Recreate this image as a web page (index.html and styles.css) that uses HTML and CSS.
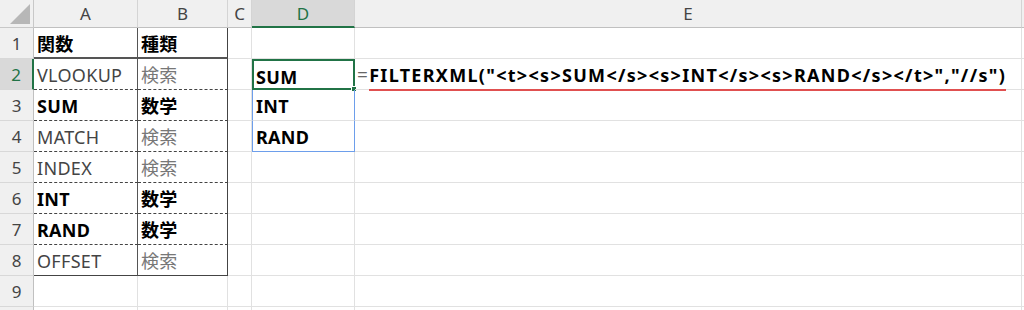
FILE: index.html
```html
<!DOCTYPE html>
<html lang="ja">
<head>
<meta charset="utf-8">
<link rel="stylesheet" href="styles.css">
</head>
<body>
<div class="sheet">
  <div class="corner"><span class="tri"></span></div>
  <div class="ch">A</div>
  <div class="ch">B</div>
  <div class="ch">C</div>
  <div class="ch ch-sel">D</div>
  <div class="ch">E</div>
  <div class="ch ch-end"></div>

  <div class="rh">1</div>
  <div class="c t-a t-head b">関数</div>
  <div class="c t-b t-head b">種類</div>
  <div class="c"></div>
  <div class="c"></div>
  <div class="c"></div>
  <div class="c"></div>

  <div class="rh rh-sel">2</div>
  <div class="c t-a n">VLOOKUP</div>
  <div class="c t-b n jp">検索</div>
  <div class="c"></div>
  <div class="c sel b">SUM<span class="handle"></span></div>
  <div class="c formula"><span class="eq">=</span><span class="fx">FILTERXML("&lt;t&gt;&lt;s&gt;SUM&lt;/s&gt;&lt;s&gt;INT&lt;/s&gt;&lt;s&gt;RAND&lt;/s&gt;&lt;/t&gt;","//s")</span></div>
  <div class="c"></div>

  <div class="rh">3</div>
  <div class="c t-a b">SUM</div>
  <div class="c t-b b">数学</div>
  <div class="c"></div>
  <div class="c spill b">INT</div>
  <div class="c"></div>
  <div class="c"></div>

  <div class="rh">4</div>
  <div class="c t-a n">MATCH</div>
  <div class="c t-b n jp">検索</div>
  <div class="c"></div>
  <div class="c spill spill-end b">RAND</div>
  <div class="c"></div>
  <div class="c"></div>

  <div class="rh">5</div>
  <div class="c t-a n">INDEX</div>
  <div class="c t-b n jp">検索</div>
  <div class="c"></div>
  <div class="c"></div>
  <div class="c"></div>
  <div class="c"></div>

  <div class="rh">6</div>
  <div class="c t-a b">INT</div>
  <div class="c t-b b">数学</div>
  <div class="c"></div>
  <div class="c"></div>
  <div class="c"></div>
  <div class="c"></div>

  <div class="rh">7</div>
  <div class="c t-a b">RAND</div>
  <div class="c t-b b">数学</div>
  <div class="c"></div>
  <div class="c"></div>
  <div class="c"></div>
  <div class="c"></div>

  <div class="rh">8</div>
  <div class="c t-a t-last n">OFFSET</div>
  <div class="c t-b t-last n jp">検索</div>
  <div class="c"></div>
  <div class="c"></div>
  <div class="c"></div>
  <div class="c"></div>

  <div class="rh">9</div>
  <div class="c"></div>
  <div class="c"></div>
  <div class="c"></div>
  <div class="c"></div>
  <div class="c"></div>
  <div class="c"></div>

  <div class="rh rh-cut"></div>
  <div class="c c-cut"></div>
  <div class="c c-cut"></div>
  <div class="c c-cut"></div>
  <div class="c c-cut"></div>
  <div class="c c-cut"></div>
  <div class="c c-cut"></div>
</div>
</body>
</html>
```

FILE: styles.css
```css
* { box-sizing: border-box; }
html, body { margin: 0; padding: 0; background: #fff; }
body {
  font-family: "Noto Sans", "Noto Sans CJK JP", sans-serif;
  overflow: hidden;
  height: 310px;
}
.sheet {
  display: grid;
  grid-template-columns: 34px 104px 90px 24px 103px 667px 1fr;
  grid-template-rows: 28px repeat(9, 31px) 3px;
  width: 1024px;
}
.corner {
  background: #f0f0f0;
  border-right: 1px solid #c8c8c8;
  border-bottom: 1px solid #c8c8c8;
  position: relative;
}
.tri {
  position: absolute;
  right: 3px;
  bottom: 3px;
  width: 0;
  height: 0;
  border-left: 20px solid transparent;
  border-bottom: 20px solid #b7b7b7;
}
.ch {
  background: #f0f0f0;
  border-right: 1px solid #d4d4d4;
  border-bottom: 1px solid #c0c0c0;
  color: #444;
  font-size: 17px;
  text-align: center;
  line-height: 27px;
}
.ch-sel {
  background: #d9d9d9;
  color: #217346;
  border-bottom: 2px solid #217346;
}
.ch-end { border-right: none; }
.rh {
  background: #f0f0f0;
  border-right: 1px solid #c0c0c0;
  border-bottom: 1px solid #d8d8d8;
  color: #444;
  font-size: 17px;
  text-align: center;
  line-height: 31px;
}
.rh-sel {
  background: #d9d9d9;
  color: #217346;
  border-right: 2px solid #217346;
}
.c {
  border-right: 1px solid #e1e1e1;
  border-bottom: 1px solid #e1e1e1;
  font-size: 18px;
  letter-spacing: 0.3px;
  line-height: 30px;
  padding: 1px 0 0 3px;
  white-space: nowrap;
  position: relative;
}
.rh-cut, .c-cut { border-bottom: none; }
.b { font-weight: 700; color: #000; }
.n { color: #444; }
.n.jp { color: #777; }
.t-a {
  border-bottom: 1px dashed #444;
  border-right: 1px solid #555;
}
.t-b {
  border-bottom: 1px dashed #444;
  border-right: 1px solid #444;
}
.t-head { border-bottom: 2px solid #555; }
.t-last { border-bottom: 1px solid #444; }
.sel {
  border: 2px solid #217346;
  padding-left: 2px;
}
.handle {
  position: absolute;
  right: -4px;
  bottom: -4px;
  width: 6px;
  height: 6px;
  background: #217346;
  border: 1px solid #fff;
}
.spill {
  border-left: 1px solid #6d9eeb;
  border-right: 1px solid #6d9eeb;
  padding-left: 3px;
}
.spill-end { border-bottom: 1px solid #6d9eeb; }
.formula {
  overflow: visible;
  padding-left: 2px;
}
.eq { color: #666; font-weight: 400; font-size: 19px; margin-right: 1px; }
.fx {
  font-weight: 700;
  color: #000;
  letter-spacing: 1.3px;
  border-bottom: 2px solid #e05050;
  padding-bottom: 2px;
}
```
